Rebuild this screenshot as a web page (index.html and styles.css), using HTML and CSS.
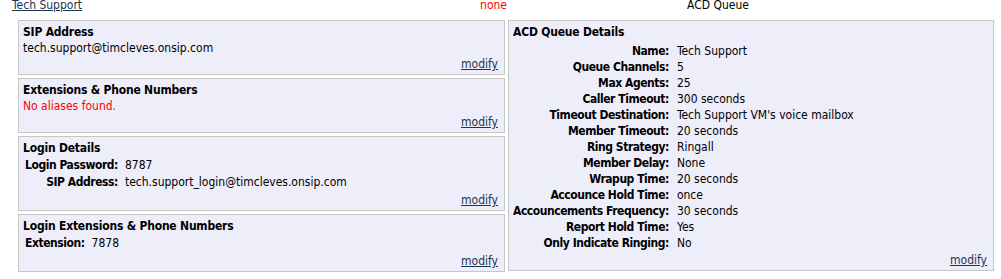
FILE: index.html
```html
<!DOCTYPE html>
<html>
<head>
<meta charset="utf-8">
<link rel="stylesheet" href="styles.css">
</head>
<body>
<div class="header">
  <a class="name-link" href="#">Tech Support</a>
  <span class="status">none</span>
  <span class="type">ACD Queue</span>
</div>
<div class="main">
  <div class="left-col">
    <div class="box">
      <div class="box-title">SIP Address</div>
      <div class="line">tech.support@timcleves.onsip.com</div>
      <div class="modify"><a href="#">modify</a></div>
    </div>
    <div class="box">
      <div class="box-title">Extensions &amp; Phone Numbers</div>
      <div class="line error">No aliases found.</div>
      <div class="modify"><a href="#">modify</a></div>
    </div>
    <div class="box">
      <div class="box-title">Login Details</div>
      <table class="kv">
        <tr><td class="k">Login Password:</td><td class="v">8787</td></tr>
        <tr><td class="k">SIP Address:</td><td class="v">tech.support_login@timcleves.onsip.com</td></tr>
      </table>
      <div class="modify"><a href="#">modify</a></div>
    </div>
    <div class="box">
      <div class="box-title">Login Extensions &amp; Phone Numbers</div>
      <table class="kv">
        <tr><td class="k">Extension:</td><td class="v">7878</td></tr>
      </table>
      <div class="modify"><a href="#">modify</a></div>
    </div>
  </div>
  <div class="right-col">
    <div class="box">
      <div class="box-title">ACD Queue Details</div>
      <table class="kv wide">
        <tr><td class="k">Name:</td><td class="v">Tech Support</td></tr>
        <tr><td class="k">Queue Channels:</td><td class="v">5</td></tr>
        <tr><td class="k">Max Agents:</td><td class="v">25</td></tr>
        <tr><td class="k">Caller Timeout:</td><td class="v">300 seconds</td></tr>
        <tr><td class="k">Timeout Destination:</td><td class="v">Tech Support VM's voice mailbox</td></tr>
        <tr><td class="k">Member Timeout:</td><td class="v">20 seconds</td></tr>
        <tr><td class="k">Ring Strategy:</td><td class="v">Ringall</td></tr>
        <tr><td class="k">Member Delay:</td><td class="v">None</td></tr>
        <tr><td class="k">Wrapup Time:</td><td class="v">20 seconds</td></tr>
        <tr><td class="k">Accounce Hold Time:</td><td class="v">once</td></tr>
        <tr><td class="k">Accouncements Frequency:</td><td class="v">30 seconds</td></tr>
        <tr><td class="k">Report Hold Time:</td><td class="v">Yes</td></tr>
        <tr><td class="k">Only Indicate Ringing:</td><td class="v">No</td></tr>
      </table>
      <div class="modify modify-wide"><a href="#">modify</a></div>
    </div>
  </div>
</div>
</body>
</html>
```
FILE: styles.css
```css
html, body {
  margin: 0;
  padding: 0;
  background: #ffffff;
}
body {
  font-family: "DejaVu Sans Condensed", "DejaVu Sans", Verdana, sans-serif;
  font-size: 12px;
  line-height: 16px;
  color: #000000;
}
a {
  color: #1c3550;
  text-decoration: underline;
}
.header {
  display: grid;
  grid-template-columns: 455px 40px 422px;
  padding-left: 12px;
  height: 16px;
  margin-top: -3px;
}
.status {
  color: #ff0000;
  text-align: right;
}
.type {
  text-align: center;
}
.main {
  display: flex;
  align-items: flex-start;
  gap: 3px;
  padding-top: 7px;
  padding-left: 18px;
}
.left-col {
  width: 487px;
  display: flex;
  flex-direction: column;
  gap: 3px;
}
.right-col {
  width: 486px;
}
.box {
  background: #eeeefb;
  border: 1px solid #c6c6c6;
  padding: 3px 4px 2px 4px;
}
.box-title {
  font-weight: bold;
  letter-spacing: -0.2px;
}
.error {
  color: #ff0000;
}
.modify {
  text-align: right;
  padding-right: 2px;
}
.modify-wide {
  padding-top: 1px;
}
.kv {
  border-collapse: separate;
  border-spacing: 2px 2px;
}
.kv td {
  padding: 0;
  line-height: 15px;
  vertical-align: top;
}
.kv .k {
  font-weight: bold;
  text-align: right;
  padding-right: 5px;
  letter-spacing: -0.45px;
  white-space: nowrap;
}
.kv.wide {
  border-spacing: 0;
  margin-top: 3px;
}
.kv.wide td {
  line-height: 16px;
}
.kv.wide .k {
  padding-right: 8px;
}
```
